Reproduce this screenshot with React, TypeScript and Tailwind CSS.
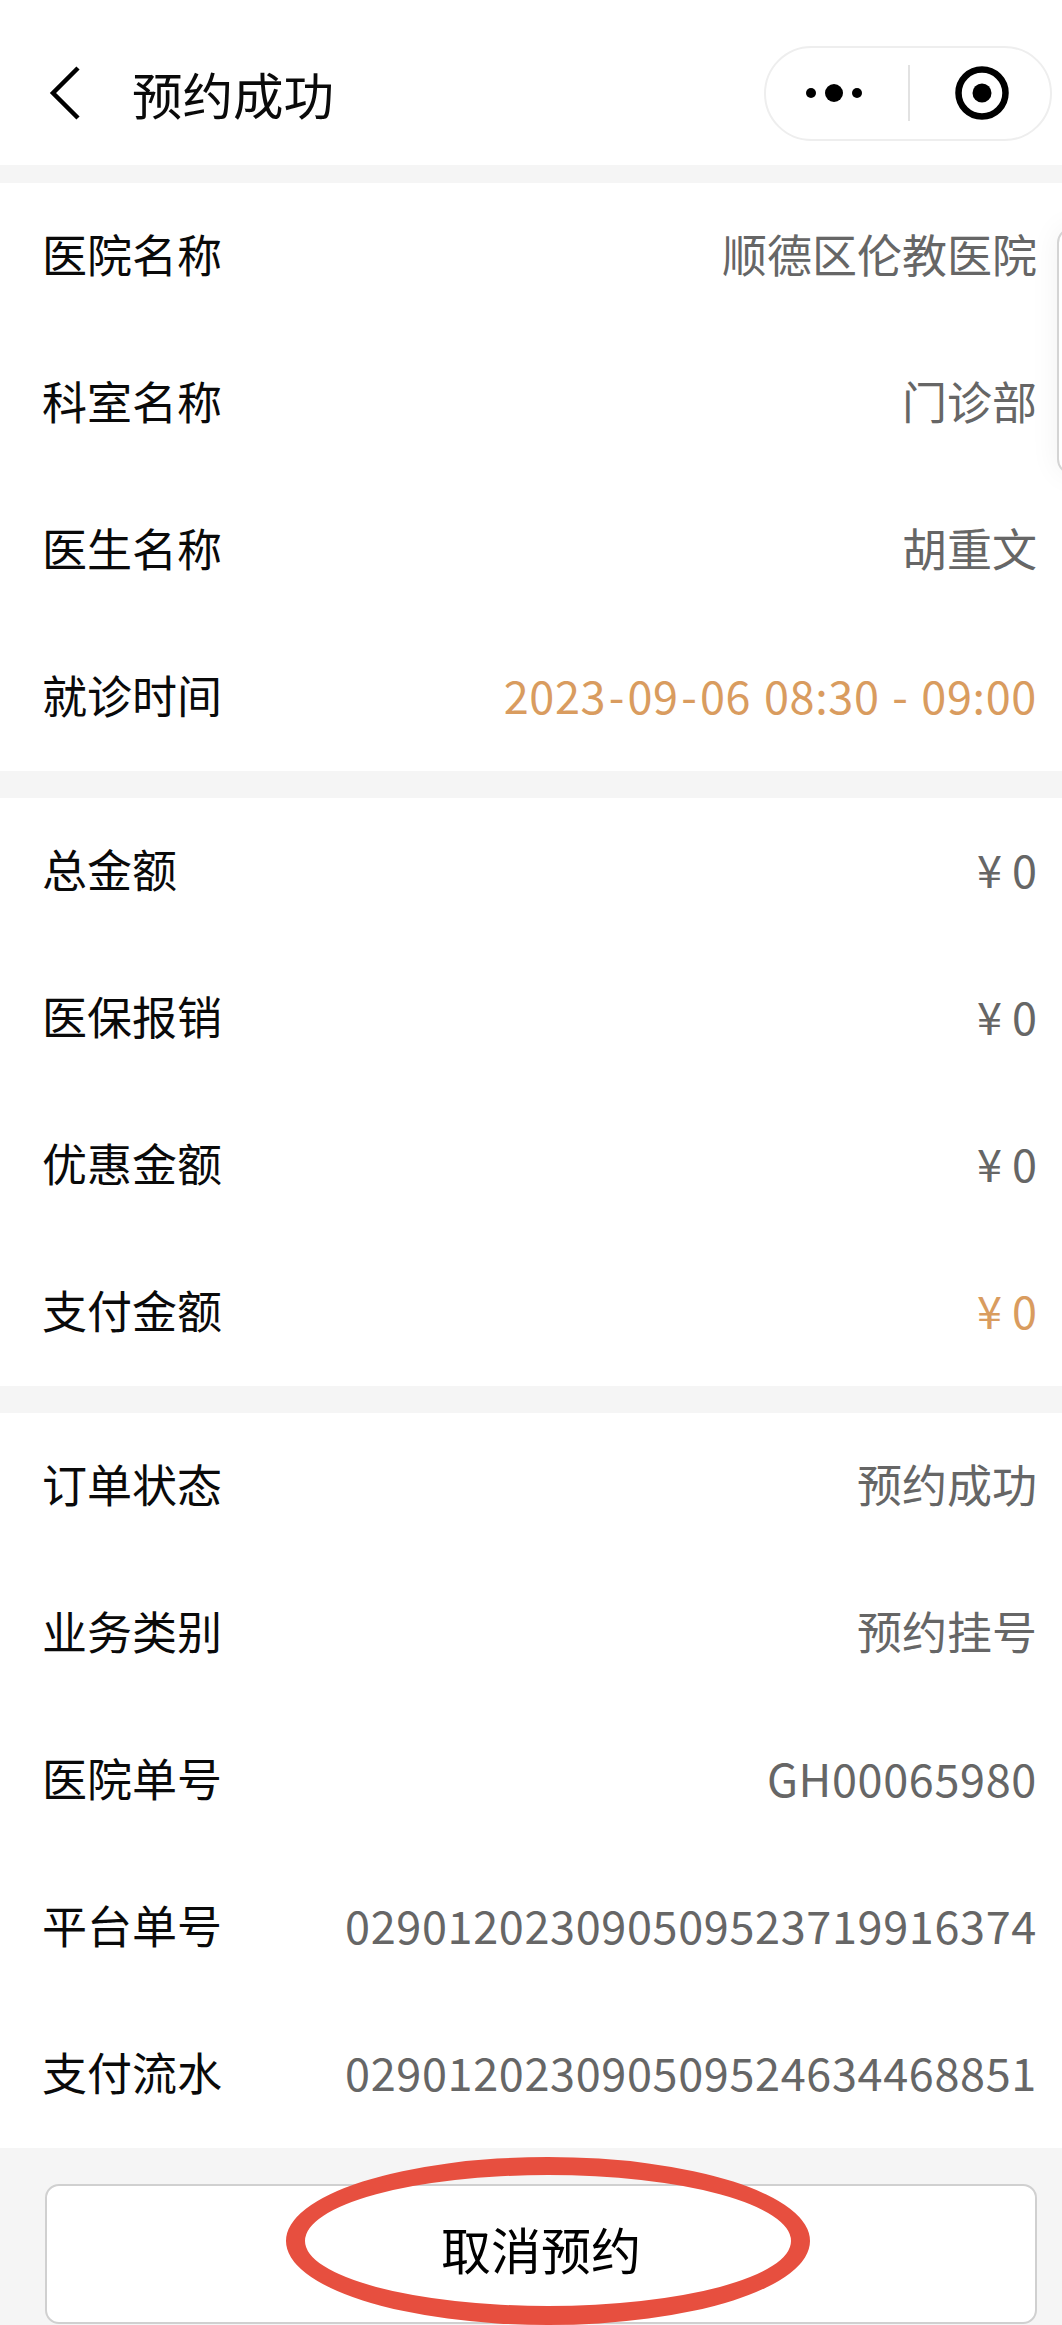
import type { ReactNode } from 'react';

interface Row {
  label: string;
  value: ReactNode;
  accent?: boolean;
  latin?: boolean;
}

const DateDash = () => <span className="mx-[2.5px]">-</span>;

const visitRows: Row[] = [
  { label: '医院名称', value: '顺德区伦教医院' },
  { label: '科室名称', value: '门诊部' },
  { label: '医生名称', value: '胡重文' },
  {
    label: '就诊时间',
    value: (
      <>
        2023
        <DateDash />
        09
        <DateDash />
        06 08:30 - 09:00
      </>
    ),
    accent: true,
    latin: true,
  },
];

const moneyRows: Row[] = [
  { label: '总金额', value: '¥ 0' },
  { label: '医保报销', value: '¥ 0' },
  { label: '优惠金额', value: '¥ 0' },
  { label: '支付金额', value: '¥ 0', accent: true },
];

const orderRows: Row[] = [
  { label: '订单状态', value: '预约成功' },
  { label: '业务类别', value: '预约挂号' },
  { label: '医院单号', value: 'GH00065980', latin: true },
  { label: '平台单号', value: '029012023090509523719916374', latin: true },
  { label: '支付流水', value: '029012023090509524634468851', latin: true },
];

const Section = ({ rows }: { rows: Row[] }) => (
  <section className="bg-white">
    {rows.map((row) => (
      <div key={row.label} className="flex h-[147px] items-center justify-between pb-[6px] pl-[42px] pr-[25px]">
        <span className="text-[45px] leading-none text-[#0a0a0a]">{row.label}</span>
        <span
          className={`text-[45px] leading-none ${row.accent ? 'text-[#d99c5f]' : 'text-[#666]'} ${
            row.latin ? 'tracking-[0.65px] [word-spacing:2px]' : ''
          }`}
        >
          {row.value}
        </span>
      </div>
    ))}
  </section>
);

const Capsule = () => (
  <div className="flex h-[95px] w-[288px] items-center rounded-full border-2 border-[#eeeeee] bg-white">
    <svg width="142" height="30" viewBox="0 0 142 30" className="shrink-0">
      <circle cx="45" cy="15" r="5" fill="#000" />
      <circle cx="68" cy="15" r="9" fill="#000" />
      <circle cx="91" cy="15" r="5" fill="#000" />
    </svg>
    <div className="h-[56px] w-[2px] shrink-0 bg-[#e2e2e2]" />
    <svg width="142" height="60" viewBox="0 0 142 60" className="shrink-0">
      <circle cx="72" cy="30" r="23.5" fill="none" stroke="#000" strokeWidth="6.5" />
      <circle cx="72" cy="30" r="9.5" fill="#000" />
    </svg>
  </div>
);

export default function App() {
  return (
    <div
      className="relative h-[2325px] w-[1062px] overflow-hidden bg-[#f5f5f5]"
      style={{ fontFamily: '"Noto Sans CJK SC", "Noto Sans", sans-serif' }}
    >
      <header className="flex h-[165px] items-center bg-white pr-[10px] pt-[21px]">
        <svg width="32" height="56" viewBox="0 0 32 56" className="ml-[49px] shrink-0">
          <path d="M29 3 L4 28 L29 53" fill="none" stroke="#000" strokeWidth="4.5" />
        </svg>
        <h1 className="ml-[51px] flex-1 text-[50.5px] font-normal leading-none text-[#0a0a0a]">预约成功</h1>
        <Capsule />
      </header>

      <div className="mt-[18px] flex flex-col gap-[27px]">
        <Section rows={visitRows} />
        <Section rows={moneyRows} />
        <Section rows={orderRows} />
      </div>

      <footer className="pl-[45px] pr-[25px] pt-[36px]">
        <button
          type="button"
          className="flex h-[140px] w-full items-center justify-center rounded-[14px] border-2 border-[#d0d0d0] bg-white pb-[12px] text-[50px] leading-none text-[#000]"
        >
          取消预约
        </button>
      </footer>

      {/* side tab peeking in from the right edge */}
      <div className="absolute left-[1057px] top-[227px] h-[248px] w-[30px] rounded-l-[16px] border-2 border-[#d4d4d4] bg-white shadow-[0_0_30px_rgba(0,0,0,0.06)]" />

      {/* red hand-drawn ring over the cancel button */}
      <svg width="560" height="190" viewBox="0 0 560 190" className="pointer-events-none absolute left-[270px] top-[2145px]">
        <path
          fillRule="evenodd"
          fill="#e74f3f"
          d="M16 96 A262 84 0 1 0 540 96 A262 84 0 1 0 16 96 Z M35 96 A243 65 0 1 0 521 96 A243 66 0 1 0 35 96 Z"
        />
      </svg>
    </div>
  );
}
